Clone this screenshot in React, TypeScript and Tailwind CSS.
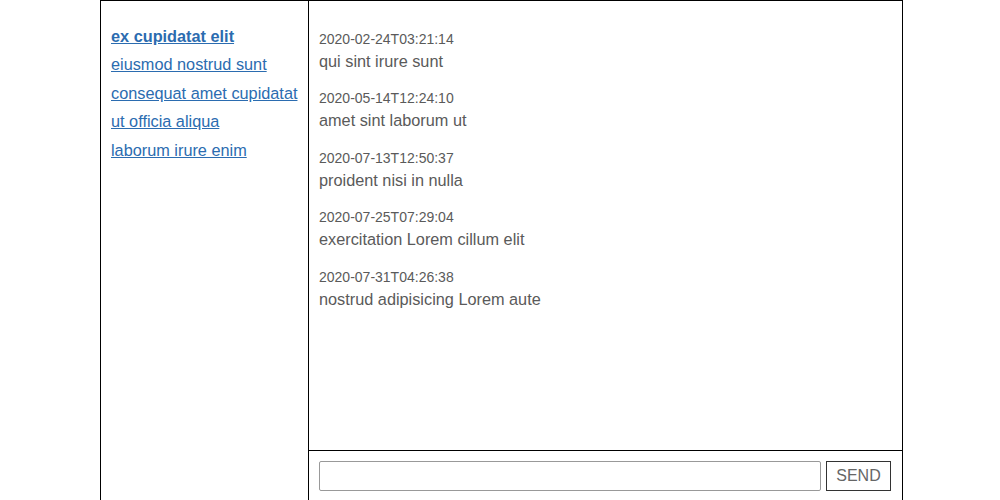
const links = [
  'ex cupidatat elit',
  'eiusmod nostrud sunt',
  'consequat amet cupidatat',
  'ut officia aliqua',
  'laborum irure enim',
]

const messages = [
  { at: '2020-02-24T03:21:14', text: 'qui sint irure sunt' },
  { at: '2020-05-14T12:24:10', text: 'amet sint laborum ut' },
  { at: '2020-07-13T12:50:37', text: 'proident nisi in nulla' },
  { at: '2020-07-25T07:29:04', text: 'exercitation Lorem cillum elit' },
  { at: '2020-07-31T04:26:38', text: 'nostrud adipisicing Lorem aute' },
]

export default function App() {
  return (
    <div className="w-[1000px] h-[500px] overflow-hidden bg-white font-['Liberation_Sans',Arial,sans-serif]">
      <div className="ml-[100px] w-[803px] h-[520px] border border-black flex">
        <nav className="w-[208px] shrink-0 border-r border-black pl-[10px] pt-[26px] flex flex-col gap-[10.4px]">
          {links.map((l, i) => (
            <a
              key={l}
              href="#"
              className={`text-[16.3px] leading-[18px] text-[#2b6cb0] underline ${i === 0 ? 'font-bold' : ''}`}
            >
              {l}
            </a>
          ))}
        </nav>
        <main className="flex-1 flex flex-col">
          <div className="h-[449px] pl-[10px] pt-[30px] flex flex-col gap-[20.4px] text-[#5a5a5a]">
            {messages.map((m) => (
              <div key={m.at} className="flex flex-col gap-[5px]">
                <div className="text-[14px] leading-[16px]">{m.at}</div>
                <div className="text-[16.3px] leading-[18px]">{m.text}</div>
              </div>
            ))}
          </div>
          <div className="border-t border-black pt-[10px] pl-[10px] pr-[10px] flex gap-[5px]">
            <input className="w-[502px] h-[30px] border border-[#999] rounded-[2px] outline-none" />
            <button className="w-[65px] h-[30px] border border-[#333] text-[#666] text-[16px]">
              SEND
            </button>
          </div>
        </main>
      </div>
    </div>
  )
}
